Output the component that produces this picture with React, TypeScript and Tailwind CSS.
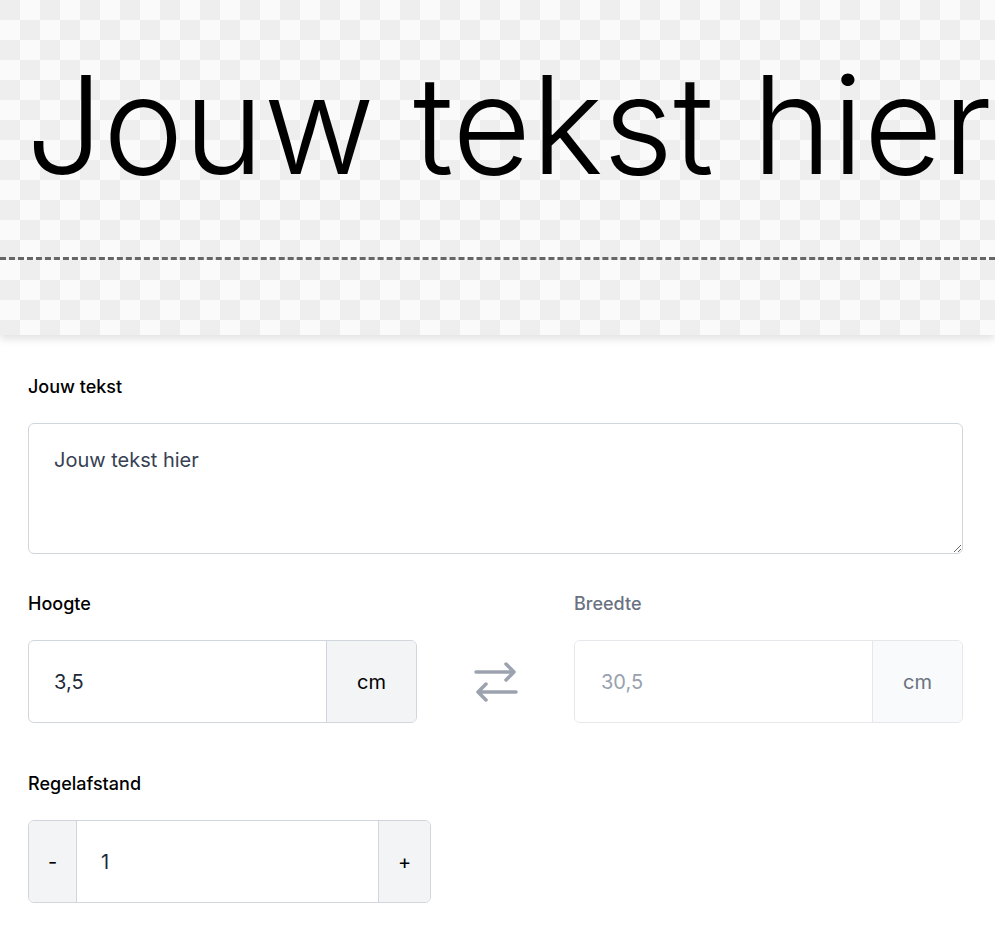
export default function App() {
  return (
    <div className="w-[995px] bg-white font-[Inter] text-black">
      <div className="relative h-[335px] overflow-hidden bg-[#fafafa] bg-[conic-gradient(#fafafa_25%,#eeeeee_0_50%,#fafafa_0_75%,#eeeeee_0)] bg-[length:40px_40px] shadow-[0_4px_8px_rgba(0,0,0,0.12)]">
        <div className="pt-[50px] pl-[26px] font-['Open_Sans'] text-[136px] font-light leading-[1.1] whitespace-nowrap">
          Jouw tekst hier
        </div>
        <div className="absolute left-0 right-0 top-[257px] border-t-[3px] border-dashed border-[#666]" />
      </div>
      <div className="w-[991px] px-[28px] pt-[38px] pb-10 font-[Inter]">
        <label className="block text-[18px] font-medium leading-[28px]">Jouw tekst</label>
        <textarea
          defaultValue="Jouw tekst hier"
          className="mt-[22px] block h-[131px] w-full resize-y rounded-md border border-gray-300 px-[25px] py-[22px] font-[Inter] text-[20px] leading-[28px] text-gray-700 outline-none"
        />
        <div className="mt-[36px] flex items-start">
          <div className="w-[389px]">
            <label className="block text-[18px] font-medium leading-[28px]">Hoogte</label>
            <div className="mt-[22px] flex h-[83px] overflow-hidden rounded-md border border-gray-300">
              <input defaultValue="3,5" className="min-w-0 flex-1 px-[25px] font-[Inter] text-[20px] text-gray-800 outline-none" />
              <span className="flex w-[90px] items-center justify-center border-l border-gray-300 bg-gray-100 text-[20px]">cm</span>
            </div>
          </div>
          <div className="flex w-[157px] justify-center pt-[72px]">
            <svg width="46" height="40" viewBox="0 0 46 40" fill="none" stroke="#9ca3af" strokeWidth="3.5" strokeLinecap="round" strokeLinejoin="round">
              <path d="M3 10h38M33 2l8 8-8 8" />
              <path d="M43 30H5M13 22l-8 8 8 8" />
            </svg>
          </div>
          <div className="w-[389px]">
            <label className="block text-[18px] font-medium leading-[28px] text-gray-500">Breedte</label>
            <div className="mt-[22px] flex h-[83px] overflow-hidden rounded-md border border-gray-200 bg-white">
              <input disabled defaultValue="30,5" className="min-w-0 flex-1 bg-white px-[26px] font-[Inter] text-[20px] text-gray-400 outline-none" />
              <span className="flex w-[90px] items-center justify-center border-l border-gray-200 bg-gray-50 text-[20px] text-gray-500">cm</span>
            </div>
          </div>
        </div>
        <label className="mt-[47px] block text-[18px] font-medium leading-[28px]">Regelafstand</label>
        <div className="mt-[22px] flex h-[83px] w-[403px] overflow-hidden rounded-md border border-gray-300">
          <button className="w-[48px] border-r border-gray-300 bg-gray-100 font-[Inter] text-[20px]">-</button>
          <input defaultValue="1" className="min-w-0 flex-1 px-[24px] font-[Inter] text-[20px] text-gray-800 outline-none" />
          <button className="w-[52px] border-l border-gray-300 bg-gray-100 font-[Inter] text-[20px]">+</button>
        </div>
      </div>
    </div>
  );
}
